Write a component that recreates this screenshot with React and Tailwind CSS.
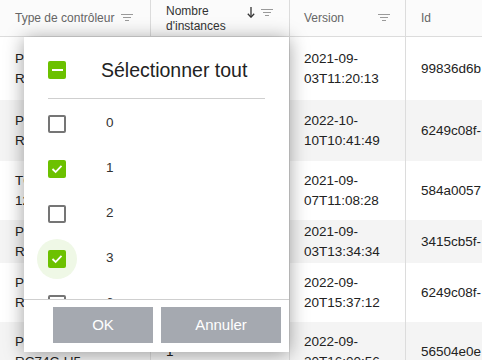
import React from "react";

const FilterIcon = () => (
  <svg width="12" height="8" viewBox="0 0 12 8" className="shrink-0">
    <line x1="0" y1="0.5" x2="12" y2="0.5" stroke="#9a9a9a" strokeWidth="1" />
    <line x1="2" y1="3.5" x2="10" y2="3.5" stroke="#9a9a9a" strokeWidth="1" />
    <line x1="4" y1="6.5" x2="8" y2="6.5" stroke="#9a9a9a" strokeWidth="1" />
  </svg>
);

const ArrowDown = () => (
  <svg width="8" height="11" viewBox="0 0 8 11" className="shrink-0">
    <line x1="4" y1="0" x2="4" y2="10" stroke="#333" strokeWidth="1.3" />
    <path d="M0.8 6.8 L4 10.2 L7.2 6.8" fill="none" stroke="#333" strokeWidth="1.3" />
  </svg>
);

const rows = [
  { h: 63, a: "PLC-S7 1500", b: "RT-Master", n: "1", v1: "2021-09-", v2: "03T11:20:13", id: "99836d6b", bg: "bg-white" },
  { h: 61, a: "PLC-S7 1200", b: "RT-Slave", n: "1", v1: "2022-10-", v2: "10T10:41:49", id: "6249c08f-", bg: "bg-[#f4f4f4]" },
  { h: 59, a: "TC-Box", b: "12-AX", n: "3", v1: "2021-09-", v2: "07T11:08:28", id: "584a0057", bg: "bg-white" },
  { h: 43, a: "PLC-S7 300", b: "RT-Base", n: "1", v1: "2021-09-", v2: "03T13:34:34", id: "3415cb5f-", bg: "bg-[#f4f4f4]" },
  { h: 59, a: "PLC-S7 400", b: "RT-Edge", n: "1", v1: "2022-09-", v2: "20T15:37:12", id: "6249c08f-", bg: "bg-white" },
  { h: 60, a: "PLC-X", b: "RC74C-U5", n: "1", v1: "2022-09-", v2: "20T16:00:56", id: "56504e0e", bg: "bg-[#f4f4f4]" },
];

const Unchecked = () => (
  <div className="w-[18px] h-[18px] border-2 border-[#757575] rounded-[2px] bg-white shrink-0" />
);

const Checked = () => (
  <div className="w-[18px] h-[18px] rounded-[2px] bg-[#6cc100] flex items-center justify-center shrink-0">
    <svg width="12" height="10" viewBox="0 0 12 10">
      <path d="M1.5 5 L4.6 8 L10.5 1.8" fill="none" stroke="white" strokeWidth="1.8" />
    </svg>
  </div>
);

const Indeterminate = () => (
  <div className="w-[18px] h-[18px] rounded-[2px] bg-[#6cc100] flex items-center justify-center shrink-0">
    <div className="w-[11px] h-[2px] bg-white" />
  </div>
);

const items = [
  { label: "0", state: "off" },
  { label: "1", state: "on" },
  { label: "2", state: "off" },
  { label: "3", state: "on", ripple: true },
  { label: "6", state: "off" },
];

export default function App() {
  return (
    <div
      className="relative w-[482px] h-[360px] overflow-hidden bg-white"
      style={{ fontFamily: '"Liberation Sans", Arial, sans-serif' }}
    >
      {/* Header */}
      <div className="grid grid-cols-[151px_139px_116px_1fr] h-[37px] border-b border-[#dcdcdc] bg-[#fbfbfb]">
        <div className="flex items-center justify-between pl-[15px] pr-[17px] border-r border-[#dcdcdc]">
          <span className="text-[12px] text-[#666]">Type de contrôleur</span>
          <FilterIcon />
        </div>
        <div className="flex items-start justify-between pl-[15px] pr-[16px] border-r border-[#dcdcdc]">
          <span className="text-[12px] leading-[15px] text-[#333] pt-[4px]">
            Nombre
            <br />
            d'instances
          </span>
          <div className="flex items-center gap-[6px] pt-[7px]">
            <ArrowDown />
            <FilterIcon />
          </div>
        </div>
        <div className="flex items-center justify-between pl-[14px] pr-[15px] border-r border-[#dcdcdc]">
          <span className="text-[12px] text-[#666]">Version</span>
          <FilterIcon />
        </div>
        <div className="flex items-center pl-[15px]">
          <span className="text-[12px] text-[#666]">Id</span>
        </div>
      </div>

      {/* Rows */}
      {rows.map((r, i) => (
        <div
          key={i}
          className={`grid grid-cols-[151px_139px_116px_1fr] text-[13.5px] leading-[20px] text-[#222] ${r.bg}`}
          style={{ height: r.h }}
        >
          <div className="flex flex-col justify-center pl-[15px] border-r border-[#dcdcdc] whitespace-nowrap overflow-hidden">
            <span>{r.a}</span>
            <span>{r.b}</span>
          </div>
          <div className="flex items-center pl-[15px] border-r border-[#dcdcdc]">
            <span>{r.n}</span>
          </div>
          <div className="flex flex-col justify-center pl-[14px] border-r border-[#dcdcdc] whitespace-nowrap">
            <span>{r.v1}</span>
            <span>{r.v2}</span>
          </div>
          <div className="flex items-center pl-[15px] whitespace-nowrap overflow-hidden">
            <span>{r.id}</span>
          </div>
        </div>
      ))}

      {/* Filter popup */}
      <div className="absolute left-[24px] top-[37px] w-[265px] h-[315px] bg-white flex flex-col shadow-[0_2px_18px_rgba(0,0,0,0.38)]">
        <div className="flex-1 overflow-hidden">
          <div className="flex items-center pl-[24px] pt-[24px] pb-[19px]">
            <Indeterminate />
            <span className="ml-[35px] text-[19.5px] leading-[18px] text-[#222]">Sélectionner tout</span>
          </div>
          <div className="mx-[24px] border-t border-[#cfcfcf]" />
          <div className="pt-[2px]">
            {items.map((it) => (
              <div key={it.label} className="h-[45px] flex items-center pl-[24px]">
                <div className="relative w-[18px] h-[18px]">
                  {it.ripple && (
                    <div className="absolute left-[-11px] top-[-11px] w-[40px] h-[40px] rounded-full bg-[#eff8e6]" />
                  )}
                  <div className="relative">
                    {it.state === "on" ? <Checked /> : <Unchecked />}
                  </div>
                </div>
                <span className="ml-[40px] text-[13.5px] text-[#333]">{it.label}</span>
              </div>
            ))}
          </div>
        </div>
        <div className="border-t border-[#cfcfcf] flex justify-end gap-[8px] pt-[7px] pb-[9px] pr-[8px]">
          <button className="w-[100px] h-[36px] bg-[#a5a9b0] text-white text-[15px]">OK</button>
          <button className="w-[120px] h-[36px] bg-[#a5a9b0] text-white text-[15px]">Annuler</button>
        </div>
      </div>
    </div>
  );
}
